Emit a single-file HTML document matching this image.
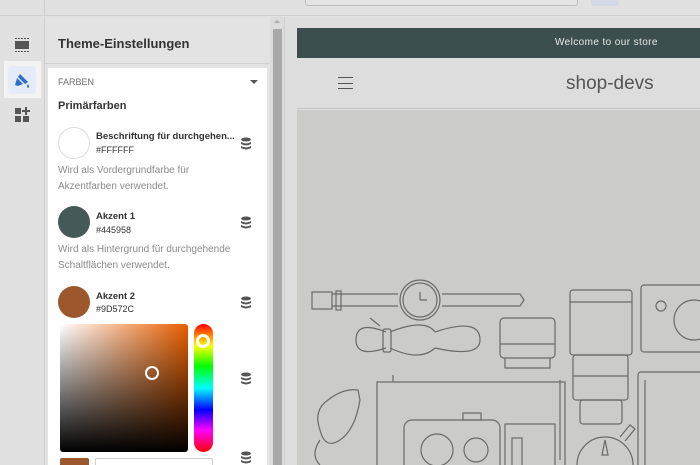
<!DOCTYPE html>
<html><head><meta charset="utf-8"><style>
*{margin:0;padding:0;box-sizing:border-box}
html,body{width:700px;height:465px;overflow:hidden}
body{background:#e1e1e1;font-family:"Liberation Sans",sans-serif;position:relative}
.abs{position:absolute}
.t{font-size:10px;color:#333}
.s{font-size:9px;color:#333}
.d{font-size:10px;color:#8a8a8a;line-height:16px}
.sw{width:32px;height:32px;border-radius:50%}
</style></head><body>
<div class="abs" style="left:0;top:0;width:700px;height:16px;background:#e1e1e1;border-bottom:1px solid #cfcfcf"></div>
<div class="abs" style="left:44px;top:0;width:1px;height:16px;background:#cfcfcf"></div>
<div class="abs" style="left:305px;top:-4px;width:273px;height:10px;border:1px solid #bdbdbd;border-radius:3px;background:#e4e4e4"></div>
<div class="abs" style="left:591px;top:0;width:28px;height:6px;background:#d3d9e6;border-radius:0 0 3px 3px"></div>
<div class="abs" style="left:0;top:17px;width:45px;height:448px;background:#e1e1e1;border-right:1px solid #cfcfcf"></div>
<svg class="abs" style="left:14px;top:37px" width="16" height="16"><rect x="1" y="4" width="14" height="8" fill="#555"/><line x1="1" y1="1.5" x2="15" y2="1.5" stroke="#555" stroke-dasharray="2 1"/><line x1="1" y1="14.5" x2="15" y2="14.5" stroke="#555" stroke-dasharray="2 1"/></svg>
<div class="abs" style="left:4px;top:61px;width:37px;height:37px;background:#f3f3f3"></div>
<div class="abs" style="left:8px;top:66px;width:28px;height:28px;background:#e6ecf7;border-radius:3px"></div>
<svg class="abs" style="left:13px;top:71px" width="18" height="18" viewBox="0 0 18 18"><path d="M7 3 L15 11 L12 13 L5 6 Z" fill="#2c6ecb"/><path d="M4 7 L10 13 L5 15 L2 14 Z" fill="#2c6ecb"/><path d="M15 13 q2 3 0 4 q-2 -1 0 -4z" fill="#2c6ecb"/></svg>
<svg class="abs" style="left:14px;top:107px" width="16" height="16"><rect x="1" y="1" width="6" height="6" fill="#555"/><rect x="1" y="9" width="6" height="6" fill="#555"/><rect x="9" y="9" width="6" height="6" fill="#555"/><path d="M12 0v8M8 4h8" stroke="#555" stroke-width="2"/></svg>
<div class="abs" style="left:45px;top:17px;width:225px;height:448px;background:#e3e3e3"></div>
<div class="abs" style="left:58px;top:36px;font-size:13px;font-weight:bold;color:#333">Theme-Einstellungen</div>
<div class="abs" style="left:45px;top:63px;width:225px;height:1px;background:#d0d0d0"></div>
<div class="abs" style="left:48px;top:68px;width:219px;height:397px;background:#fff;overflow:hidden"></div>
<div class="abs" style="left:58px;top:77px;font-size:9px;color:#6b6b6b">FARBEN</div>
<div class="abs" style="left:250px;top:80px;width:0;height:0;border-left:4px solid transparent;border-right:4px solid transparent;border-top:4px solid #555"></div>
<div class="abs" style="left:58px;top:100px;font-size:11px;font-weight:bold;color:#333">Primärfarben</div>
<div class="abs sw" style="left:58px;top:127px;border:1px solid #ddd;background:#fff"></div>
<div class="abs t" style="left:96px;top:131px;font-weight:bold;font-size:9.5px">Beschriftung für durchgehen...</div>
<div class="abs s" style="left:96px;top:145px">#FFFFFF</div>
<div class="abs d" style="left:58px;top:163px">Wird als Vordergrundfarbe für<br>Akzentfarben verwendet.</div>
<div class="abs sw" style="left:58px;top:206px;background:#445958"></div>
<div class="abs t" style="left:96px;top:211px;font-weight:bold;font-size:9.5px">Akzent 1</div>
<div class="abs s" style="left:96px;top:225px">#445958</div>
<div class="abs d" style="left:58px;top:242px">Wird als Hintergrund für durchgehende<br>Schaltflächen verwendet.</div>
<div class="abs sw" style="left:58px;top:286px;background:#9d572c"></div>
<div class="abs t" style="left:96px;top:291px;font-weight:bold;font-size:9.5px">Akzent 2</div>
<div class="abs s" style="left:96px;top:304px">#9D572C</div>
<svg width="0" height="0" style="position:absolute"><defs><g id="db"><ellipse cx="6" cy="2.5" rx="5" ry="2" fill="#555"/><path d="M1 5q5 3 10 0v2q-5 3-10 0z" fill="#555"/><path d="M1 9q5 3 10 0v2q-5 3-10 0z" fill="#555"/></g></defs></svg>
<svg class="abs" style="left:240px;top:137px" width="12" height="13"><use href="#db"/></svg>
<svg class="abs" style="left:240px;top:216px" width="12" height="13"><use href="#db"/></svg>
<svg class="abs" style="left:240px;top:296px" width="12" height="13"><use href="#db"/></svg>
<svg class="abs" style="left:240px;top:372px" width="12" height="13"><use href="#db"/></svg>
<svg class="abs" style="left:240px;top:451px" width="12" height="13"><use href="#db"/></svg>
<div class="abs" style="left:60px;top:324px;width:128px;height:128px;border-radius:3px;background:linear-gradient(to top,#000,rgba(0,0,0,0)),linear-gradient(to right,#fff,#e85f00)"></div>
<div class="abs" style="left:145px;top:366px;width:14px;height:14px;border-radius:50%;border:2px solid #fff"></div>
<div class="abs" style="left:194px;top:324px;width:19px;height:128px;border-radius:10px;background:linear-gradient(to bottom,#f00 0%,#ff0 17%,#0f0 33%,#0ff 50%,#00f 67%,#f0f 83%,#f00 100%)"></div>
<div class="abs" style="left:196px;top:334px;width:14px;height:14px;border-radius:50%;border:3px solid #fff"></div>
<div class="abs" style="left:60px;top:458px;width:29px;height:7px;background:#9d572c;border-radius:2px 2px 0 0"></div>
<div class="abs" style="left:95px;top:458px;width:118px;height:7px;border:1px solid #ccc;border-bottom:none;border-radius:2px 2px 0 0"></div>
<div class="abs" style="left:270px;top:17px;width:14px;height:448px;background:#dcdcdc"></div>
<div class="abs" style="left:273px;top:29px;width:9px;height:436px;background:#a9a9a9"></div>
<div class="abs" style="left:274px;top:20px;width:0;height:0;border-left:3px solid transparent;border-right:3px solid transparent;border-bottom:3px solid #aaa"></div>
<div class="abs" style="left:284px;top:17px;width:1px;height:448px;background:#cfcfcf"></div>
<div class="abs" style="left:285px;top:17px;width:415px;height:448px;background:#dedede"></div>
<div class="abs" style="left:297px;top:28px;width:403px;height:30px;background:#3c4e4d"></div>
<div class="abs" style="left:555px;top:37px;font-size:10px;color:#e8e8e8;letter-spacing:0.4px">Welcome to our store</div>
<div class="abs" style="left:297px;top:58px;width:403px;height:51px;background:#dddddd;border-bottom:1px solid #c4c4c4"></div>
<div class="abs" style="left:338px;top:77px;width:15px;height:12px;border-top:1px solid #555;border-bottom:1px solid #555"></div>
<div class="abs" style="left:338px;top:83px;width:15px;height:1px;background:#555"></div>
<div class="abs" style="left:566px;top:73px;font-size:19px;color:#555">shop-devs</div>
<svg class="abs" style="left:297px;top:110px" width="403" height="355" fill="none" stroke="#6a6a6a" stroke-width="1.2">
<rect x="0" y="0" width="403" height="355" fill="#cbcbc9" stroke="none"/>
<g transform="translate(-297,-110)">
<rect x="312" y="292" width="20" height="17"/><path d="M332 294h66M332 306h66M442 294h78l4 6-4 6h-78"/><rect x="336" y="291" width="5" height="19"/>
<circle cx="420" cy="300" r="20"/><circle cx="420" cy="300" r="17"/><path d="M420 300v-8M420 300h7"/>
<path d="M386 332q-30-12-30 8q0 18 30 8M390 332q35-14 45 0M390 348q30 14 45 0M435 332q45-15 45 8q0 18-45 8"/><rect x="383" y="329" width="8" height="23" rx="2"/><path d="M380 326l-10-8"/>
<rect x="500" y="318" width="55" height="40" rx="4"/><path d="M500 344h55M505 358v10h45v-10"/>
<rect x="570" y="290" width="62" height="65" rx="3"/><path d="M570 302h62"/><rect x="573" y="355" width="55" height="45" rx="3"/><rect x="580" y="400" width="42" height="24" rx="3"/><path d="M573 376h55"/>
<rect x="641" y="285" width="70" height="67" rx="3"/><circle cx="661" cy="306" r="5"/><circle cx="694" cy="320" r="20"/>
<path d="M328 400q-15 10-8 30q5 20 20 10q15-10 20-40l-2-10q-15-2-30 10z"/><path d="M320 440q-10 15 0 25"/>
<rect x="377" y="382" width="188" height="90"/><path d="M393 375v7M560 380v80"/>
<rect x="404" y="420" width="96" height="60" rx="8"/><circle cx="437" cy="450" r="16"/><circle cx="476" cy="450" r="12"/><rect x="463" y="413" width="18" height="7"/>
<rect x="505" y="424" width="50" height="50"/><rect x="512" y="438" width="10" height="30"/>
<rect x="638" y="372" width="70" height="100" rx="3"/><path d="M645 380v90"/>
<circle cx="605" cy="465" r="28"/><path d="M605 440l-3 15h6z"/><path d="M620 437l10-12 5 4-10 12"/>
</g></svg>
</body></html>
